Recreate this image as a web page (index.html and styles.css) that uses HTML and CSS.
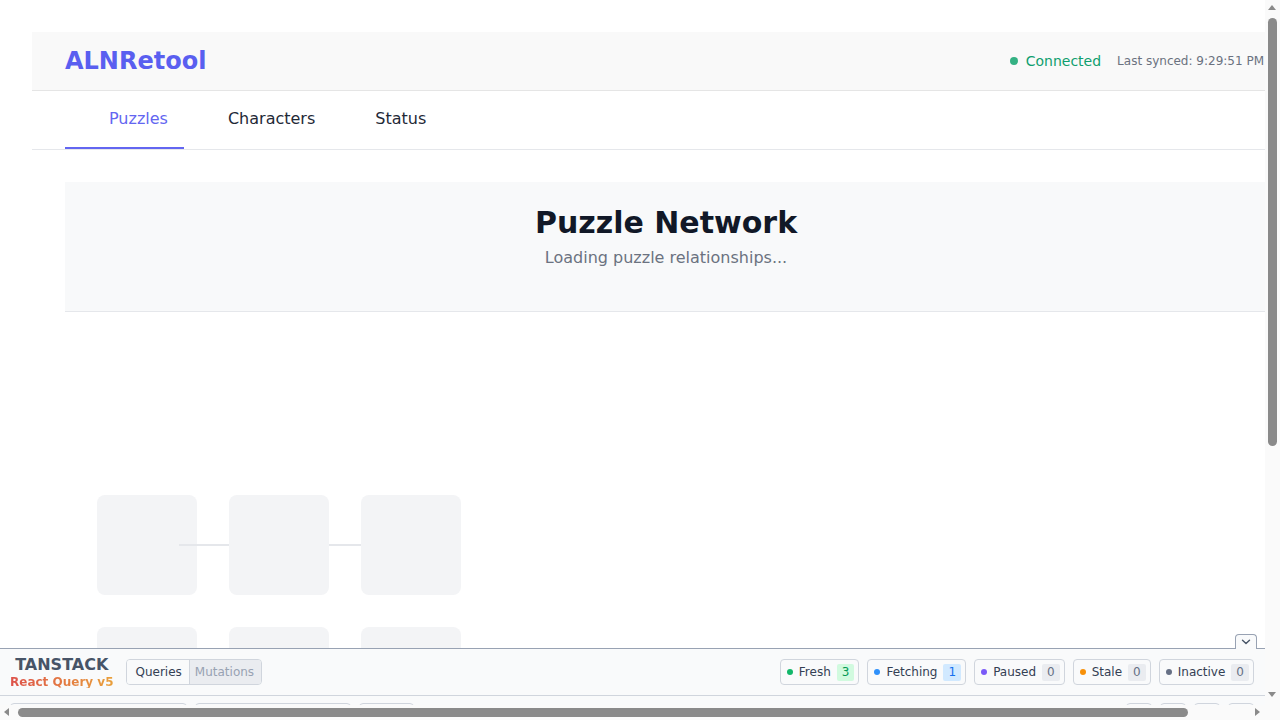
FILE: index.html
```html
<!DOCTYPE html>
<html lang="en">
<head>
<meta charset="utf-8">
<title>ALNRetool</title>
<link rel="stylesheet" href="styles.css">
</head>
<body>
<div class="app">
  <header class="app-header">
    <h1 class="logo">ALNRetool</h1>
    <div class="sync">
      <span class="conn"><span class="conn-dot"></span>Connected</span>
      <span class="synced">Last synced: 9:29:51 PM</span>
    </div>
  </header>
  <nav class="tabs">
    <a class="tab active"><span class="tab-icon"></span>Puzzles</a>
    <a class="tab"><span class="tab-icon"></span>Characters</a>
    <a class="tab"><span class="tab-icon"></span>Status</a>
  </nav>
  <main class="main">
    <section class="hero">
      <h2 class="hero-title">Puzzle Network</h2>
      <p class="hero-sub">Loading puzzle relationships...</p>
    </section>
    <div class="skeleton-area">
      <div class="skeleton-grid">
        <div class="sk-node"></div>
        <div class="sk-node"></div>
        <div class="sk-node"></div>
        <div class="sk-node"></div>
        <div class="sk-node"></div>
        <div class="sk-node"></div>
        <span class="sk-edge e1"></span>
        <span class="sk-edge e2"></span>
      </div>
    </div>
  </main>
</div>

<div class="rq-panel">
  <button class="rq-toggle" aria-label="Close devtools">
    <svg width="10" height="6" viewBox="0 0 10 6"><path d="M1.5 1.2 L5 4.5 L8.5 1.2" fill="none" stroke="#475467" stroke-width="1.4" stroke-linecap="round" stroke-linejoin="round"/></svg>
  </button>
  <div class="rq-inner">
    <div class="rq-head">
      <div class="rq-logo">
        <span class="rq-tanstack">TANSTACK</span>
        <span class="rq-flavor">React Query v5</span>
      </div>
      <div class="rq-seg">
        <span class="seg on">Queries</span>
        <span class="seg">Mutations</span>
      </div>
      <div class="rq-status">
        <span class="st"><i class="d d-green"></i>Fresh<b class="c c-green">3</b></span>
        <span class="st"><i class="d d-blue"></i>Fetching<b class="c c-blue">1</b></span>
        <span class="st"><i class="d d-purple"></i>Paused<b class="c">0</b></span>
        <span class="st"><i class="d d-orange"></i>Stale<b class="c">0</b></span>
        <span class="st"><i class="d d-gray"></i>Inactive<b class="c">0</b></span>
      </div>
    </div>
    <div class="rq-tools">
      <span class="tl tl-search"></span>
      <span class="tl tl-select"></span>
      <span class="tl tl-btn"></span>
      <span class="tl-spacer"></span>
      <span class="tl tl-icon"></span>
      <span class="tl tl-icon"></span>
      <span class="tl tl-icon"></span>
      <span class="tl tl-icon"></span>
    </div>
  </div>
</div>

<div class="sb-v" aria-hidden="true">
  <span class="sb-arrow sb-up"></span>
  <span class="sb-vthumb"></span>
  <span class="sb-arrow sb-down"></span>
</div>
<div class="sb-h" aria-hidden="true">
  <span class="sb-arrow sb-left"></span>
  <span class="sb-hthumb"></span>
  <span class="sb-arrow sb-right"></span>
</div>
<div class="sb-corner" aria-hidden="true"></div>
</body>
</html>
```
FILE: styles.css
```css
* { box-sizing: border-box; }

html, body { margin: 0; }

html { overflow: hidden; }

body {
  padding: 32px 32px 0;
  background: #ffffff;
  font-family: "DejaVu Sans", "Noto Sans", sans-serif;
  color: #1f2937;
}

.app { width: 1235px; }

/* Header */
.app-header {
  display: flex;
  align-items: center;
  justify-content: space-between;
  height: 59px;
  padding: 0 3px 0 33px;
  background: #f9f9f9;
  border-bottom: 1px solid #e5e5e5;
}

.logo {
  margin: 0;
  font-size: 24px;
  line-height: 30px;
  font-weight: 700;
  color: #5a5ff0;
}

.sync { display: flex; align-items: center; gap: 16px; }

.conn {
  display: flex;
  align-items: center;
  gap: 8px;
  font-size: 14px;
  color: #0f9f6e;
}

.conn-dot {
  width: 8px;
  height: 8px;
  border-radius: 50%;
  background: #34b183;
}

.synced { font-size: 12px; color: #6b7280; }

/* Tabs */
.tabs {
  display: flex;
  padding-left: 33px;
  border-bottom: 1px solid #e5e7eb;
}

.tab {
  display: flex;
  padding: 16px;
  font-size: 16px;
  line-height: 24px;
  color: #1f2937;
  border-bottom: 2px solid transparent;
  cursor: pointer;
}

.tab-icon { width: 20px; margin-right: 8px; }

.tab.active { color: #6366f1; border-bottom-color: #6366f1; }

/* Main */
.main { padding: 32px 0 0 33px; }

.hero {
  padding: 23px 32px 41px;
  background: #f8f9fa;
  border-bottom: 1px solid #e5e7eb;
  text-align: center;
}

.hero-title {
  margin: 0 0 5px;
  font-size: 30px;
  line-height: 36px;
  font-weight: 700;
  color: #111827;
}

.hero-sub {
  margin: 0;
  font-size: 16px;
  line-height: 24px;
  color: #6b7280;
}

.skeleton-area {
  height: 408px;
  padding: 183px 0 0 32px;
  overflow: hidden;
}

.skeleton-grid {
  position: relative;
  display: grid;
  grid-template-columns: repeat(3, 100px);
  gap: 32px;
}

.sk-node {
  height: 100px;
  border-radius: 8px;
  background: #f3f4f6;
}

.sk-edge {
  position: absolute;
  top: 49px;
  height: 2px;
  background: #e5e7eb;
}

.e1 { left: 82px; width: 50px; }
.e2 { left: 232px; width: 32px; }

/* React Query devtools panel */
.rq-panel {
  position: fixed;
  left: 0;
  right: 15px;
  bottom: 15px;
  height: 57px;
  background: #f9fafb;
  border-top: 1px solid #98a2b3;
  font-family: "DejaVu Sans", "Noto Sans", sans-serif;
  z-index: 10;
}

.rq-inner { height: 100%; overflow: hidden; }

.rq-toggle {
  position: absolute;
  top: -15px;
  right: 8px;
  width: 22px;
  height: 15px;
  padding: 0;
  display: flex;
  align-items: center;
  justify-content: center;
  background: #f9fafb;
  border: 1px solid #98a2b3;
  border-bottom: none;
  border-radius: 4px 4px 0 0;
  z-index: 2;
}

.rq-head {
  display: flex;
  align-items: center;
  height: 47px;
  padding: 0 11px 0 10px;
  border-bottom: 1px solid #d0d5dd;
}

.rq-logo {
  display: flex;
  flex-direction: column;
  align-items: center;
  margin-right: 13px;
}

.rq-tanstack {
  font-size: 16px;
  line-height: 1;
  font-weight: 800;
  color: #475467;
  white-space: nowrap;
}

.rq-flavor {
  margin-top: 3px;
  font-size: 12px;
  line-height: 1;
  font-weight: 600;
  white-space: nowrap;
  background: linear-gradient(to right, #dd524b, #e9a03b);
  -webkit-background-clip: text;
  background-clip: text;
  color: transparent;
}

.rq-seg {
  display: flex;
  height: 26px;
  border: 1px solid #d0d5dd;
  border-radius: 4px;
  overflow: hidden;
  font-size: 12px;
}

.seg {
  display: flex;
  align-items: center;
  padding: 0 7px 0 5px;
  background: #eaecf0;
  color: #98a2b3;
}

.seg.on {
  padding: 0 7px 0 8px;
  background: #f9fafb;
  color: #344054;
  border-right: 1px solid #d0d5dd;
}

.rq-status { margin-left: auto; display: flex; gap: 8px; }

.st {
  display: flex;
  align-items: center;
  gap: 6px;
  height: 26px;
  padding: 0 4px 0 6px;
  border: 1px solid #d0d5dd;
  border-radius: 4px;
  font-size: 12px;
  color: #344054;
}

.d { width: 6px; height: 6px; border-radius: 50%; }
.d-green { background: #12b76a; }
.d-blue { background: #2e90fa; }
.d-purple { background: #7a5af8; }
.d-orange { background: #f79009; }
.d-gray { background: #667085; }

.c {
  padding: 0 5px;
  line-height: 17px;
  font-weight: 400;
  border-radius: 2px;
  background: #eaecf0;
  color: #667085;
}

.c-green { background: #d1fadf; color: #039855; }
.c-blue { background: #d1e9ff; color: #1570ef; }

.rq-tools {
  display: flex;
  gap: 8px;
  padding: 7px 11px 0 10px;
}

.tl {
  height: 24px;
  border: 1px solid #d0d5dd;
  border-radius: 4px;
}

.tl-search { width: 177px; }
.tl-select { width: 156px; }
.tl-btn { width: 55px; }
.tl-spacer { flex: 1; }
.tl-icon { width: 26px; }

/* Browser scrollbars (drawn over the page) */
.sb-v {
  position: fixed;
  top: 0;
  right: 0;
  width: 15px;
  height: 705px;
  background: #fafafa;
  z-index: 20;
}

.sb-h {
  position: fixed;
  left: 0;
  bottom: 0;
  width: 1265px;
  height: 15px;
  background: #fafafa;
  z-index: 20;
}

.sb-corner {
  position: fixed;
  right: 0;
  bottom: 0;
  width: 15px;
  height: 15px;
  background: #fafafa;
  z-index: 20;
}

.sb-vthumb {
  position: absolute;
  left: 3px;
  top: 18px;
  width: 9px;
  height: 428px;
  border-radius: 5px;
  background: #8a8a8a;
}

.sb-hthumb {
  position: absolute;
  top: 3px;
  left: 18px;
  width: 1170px;
  height: 9px;
  border-radius: 5px;
  background: #8a8a8a;
}

.sb-arrow {
  position: absolute;
  width: 0;
  height: 0;
  border-style: solid;
  border-color: transparent;
}

.sb-up {
  left: 3px;
  top: 5px;
  border-width: 0 4.5px 5px;
  border-bottom-color: #8a8a8a;
}

.sb-down {
  left: 3px;
  bottom: 8px;
  border-width: 5px 4.5px 0;
  border-top-color: #8a8a8a;
}

.sb-left {
  left: 4px;
  top: 3px;
  border-width: 4.5px 5px 4.5px 0;
  border-right-color: #8a8a8a;
}

.sb-right {
  right: 5px;
  top: 3px;
  border-width: 4.5px 0 4.5px 5px;
  border-left-color: #8a8a8a;
}
```
